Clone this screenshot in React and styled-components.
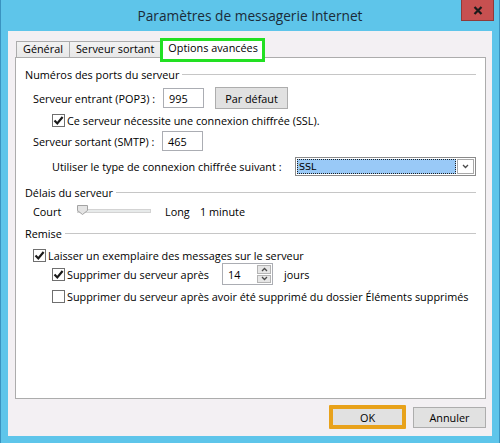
import React from "react";
import styled, { createGlobalStyle } from "styled-components";

const GlobalStyle = createGlobalStyle`
  html, body {
    margin: 0;
    padding: 0;
    background: #fff;
  }
  body {
    font-family: "Open Sans", "Noto Sans", sans-serif;
    font-size: 10.85px;
    color: #000;
  }
  * {
    box-sizing: border-box;
  }
`;

const Window = styled.div`
  width: 500px;
  height: 443px;
  background: #5ec5ea;
  border-left: 1px solid #3a93c0;
  border-right: 1px solid #3a93c0;
  display: flex;
  flex-direction: column;
`;

const TitleBar = styled.div`
  height: 31px;
  flex-shrink: 0;
  display: grid;
  grid-template-columns: 1fr auto 1fr;
  align-items: start;
`;

const Title = styled.div`
  grid-column: 2;
  align-self: center;
  font-size: 13.7px;
  color: #1b2b38;
  white-space: nowrap;
  padding-bottom: 1px;
`;

const CloseButton = styled.div`
  grid-column: 3;
  justify-self: end;
  margin-right: 5px;
  width: 33px;
  height: 21px;
  background: #c75050;
  border: 1px solid #8f3a3a;
  border-top: none;
  display: flex;
  align-items: center;
  justify-content: center;
`;

const Client = styled.div`
  flex: 1;
  margin: 0 7px 7px 7px;
  background: #f3f0f3;
  padding: 10px 6px 0 7px;
  display: flex;
  flex-direction: column;
`;

const TabStrip = styled.div`
  display: flex;
  align-items: flex-end;
  height: 16px;
  padding-left: 1px;
`;

const Tab = styled.div`
  height: 16px;
  padding: 0 6px;
  margin-left: ${(p) => (p.$first ? 0 : -1)}px;
  border: 1px solid #acacac;
  border-bottom: none;
  background: linear-gradient(#f2f2f2, #e8e8e8);
  line-height: 14px;
  white-space: nowrap;
`;

const ActiveTab = styled.div`
  position: relative;
  z-index: 1;
  width: 105px;
  height: 24px;
  margin-left: -1px;
  margin-bottom: -5px;
  border: 3px solid #22e022;
  background: #fff;
  padding-left: 5px;
  line-height: 14px;
  white-space: nowrap;
`;

const Panel = styled.div`
  height: 342px;
  background: #fff;
  border: 1px solid #acacac;
  padding: 8px 9px 0 9px;
  display: flex;
  flex-direction: column;
`;

const Row = styled.div`
  display: flex;
  align-items: center;
  height: ${(p) => p.$h || 16}px;
  margin-top: ${(p) => p.$mt || 0}px;
  padding-left: ${(p) => p.$indent || 0}px;
  white-space: nowrap;
`;

const Label = styled.span`
  flex-shrink: 0;
  width: ${(p) => (p.$w ? `${p.$w}px` : "auto")};
  margin-left: ${(p) => p.$ml || 0}px;
`;

const Rule = styled.div`
  flex: 1;
  height: 1px;
  margin-left: 3px;
  background: #c6c6c6;
`;

const TextBox = styled.div`
  width: ${(p) => p.$w}px;
  height: ${(p) => p.$h || 20}px;
  border: 1px solid #abadb3;
  background: #fff;
  padding-left: 5px;
  display: flex;
  align-items: center;
`;

const Button = styled.div`
  width: ${(p) => p.$w || 73}px;
  height: ${(p) => p.$h || 21}px;
  margin-left: ${(p) => p.$ml || 0}px;
  background: #e1e1e1;
  border: 1px solid #adadad;
  display: flex;
  align-items: center;
  justify-content: center;
`;

const HighlightButton = styled.div`
  width: 77px;
  height: 24px;
  background: #e1e1e1;
  border: 4px solid #e8a21b;
  border-radius: 1px;
  display: flex;
  align-items: center;
  justify-content: center;
`;

const Box = styled.span`
  flex-shrink: 0;
  width: 13px;
  height: 13px;
  border: 1px solid #6f6f6f;
  background: #fff;
  display: flex;
  align-items: center;
  justify-content: center;
  margin-right: 2px;
`;

const Select = styled.div`
  width: 181px;
  height: 19px;
  border: 1px solid #8a8a8a;
  background: #fff;
  display: flex;
  padding: 1px;
`;

const SelectValue = styled.div`
  flex: 1;
  background: #99c9f7;
  border: 1px dotted #202020;
  font-family: "DejaVu Sans", "Liberation Sans", sans-serif;
  font-size: 9.5px;
  line-height: 13px;
  padding-left: 1px;
`;

const SelectArrow = styled.div`
  width: 17px;
  margin-left: 1px;
  border: 1px solid #a8a8a8;
  background: #fff;
  display: flex;
  align-items: center;
  justify-content: center;
`;

const Slider = styled.div`
  position: relative;
  width: 74px;
  height: 16px;
  margin-right: 14px;
  display: flex;
  align-items: center;
`;

const Track = styled.div`
  width: 100%;
  height: 4px;
  background: #e7eaea;
  border: 1px solid #d3d3d3;
`;

const Thumb = styled.svg`
  position: absolute;
  left: 0;
  top: 2px;
`;

const SpinWrap = styled.div`
  display: flex;
  height: 22px;
  border: 1px solid #abadb3;
  background: #fff;
  margin-right: 11px;
`;

const SpinInput = styled.div`
  width: 34px;
  padding-left: 5px;
  display: flex;
  align-items: center;
`;

const SpinButtons = styled.div`
  width: 15px;
  display: flex;
  flex-direction: column;
  padding: 1px 1px 1px 0;
  gap: 1px;
`;

const SpinButton = styled.div`
  flex: 1;
  background: #e6e6e6;
  border: 1px solid #b4b4b4;
  display: flex;
  align-items: center;
  justify-content: center;
`;

const Footer = styled.div`
  margin-top: 6px;
  display: flex;
  justify-content: flex-end;
  align-items: center;
  gap: 7px;
`;

function Check({ checked }) {
  return (
    <Box>
      {checked && (
        <svg width="11" height="11" viewBox="0 0 11 11">
          <path
            d="M1.5 5.5 L4.3 8.4 L9.6 2"
            fill="none"
            stroke="#1a1a1a"
            strokeWidth="2.2"
          />
        </svg>
      )}
    </Box>
  );
}

function GroupHeader({ title, mt }) {
  return (
    <Row $mt={mt}>
      <Label>{title}</Label>
      <Rule />
    </Row>
  );
}

function Chevron({ up }) {
  return (
    <svg width="7" height="5" viewBox="0 0 7 5">
      <path
        d={up ? "M1 4 L3.5 1.5 L6 4" : "M1 1 L3.5 3.5 L6 1"}
        fill="none"
        stroke="#4a4a4a"
        strokeWidth="1.3"
      />
    </svg>
  );
}

export default function App() {
  return (
    <>
      <GlobalStyle />
      <Window>
        <TitleBar>
          <Title>Paramètres de messagerie Internet</Title>
          <CloseButton>
            <svg width="10" height="9" viewBox="0 0 10 9">
              <path
                d="M1.5 1 L8.5 8 M8.5 1 L1.5 8"
                stroke="#1a1a1a"
                strokeWidth="2.2"
              />
            </svg>
          </CloseButton>
        </TitleBar>
        <Client>
          <TabStrip>
            <Tab $first>Général</Tab>
            <Tab>Serveur sortant</Tab>
            <ActiveTab>Options avancées</ActiveTab>
          </TabStrip>
          <Panel>
            <GroupHeader title="Numéros des ports du serveur" />
            <Row $h={22} $mt={5} $indent={8}>
              <Label $w={130}>Serveur entrant (POP3) :</Label>
              <TextBox $w={41}>995</TextBox>
              <Button $w={73} $h={22} $ml={11}>
                Par défaut
              </Button>
            </Row>
            <Row $h={18} $mt={2} $indent={27}>
              <Check checked />
              <Label>Ce serveur nécessite une connexion chiffrée (SSL).</Label>
            </Row>
            <Row $h={20} $mt={2} $indent={8}>
              <Label $w={129}>Serveur sortant (SMTP) :</Label>
              <TextBox $w={41}>465</TextBox>
            </Row>
            <Row $h={20} $mt={5} $indent={27}>
              <Label $w={243}>
                Utiliser le type de connexion chiffrée suivant :
              </Label>
              <Select>
                <SelectValue>SSL</SelectValue>
                <SelectArrow>
                  <Chevron />
                </SelectArrow>
              </Select>
            </Row>
            <GroupHeader title="Délais du serveur" mt={8} />
            <Row $mt={3} $indent={8}>
              <Label $w={44}>Court</Label>
              <Slider>
                <Track />
                <Thumb width="11" height="10" viewBox="0 0 11 10">
                  <polygon
                    points="0.5,0.5 10.5,0.5 10.5,5.5 5.5,9.5 0.5,5.5"
                    fill="#e4e4e4"
                    stroke="#a3a3a3"
                  />
                </Thumb>
              </Slider>
              <Label $w={35}>Long</Label>
              <Label>1 minute</Label>
            </Row>
            <GroupHeader title="Remise" mt={6} />
            <Row $mt={6} $indent={8}>
              <Check checked />
              <Label>Laisser un exemplaire des messages sur le serveur</Label>
            </Row>
            <Row $h={22} $indent={27}>
              <Check checked />
              <Label $w={155}>Supprimer du serveur après</Label>
              <SpinWrap>
                <SpinInput>14</SpinInput>
                <SpinButtons>
                  <SpinButton>
                    <Chevron up />
                  </SpinButton>
                  <SpinButton>
                    <Chevron />
                  </SpinButton>
                </SpinButtons>
              </SpinWrap>
              <Label>jours</Label>
            </Row>
            <Row $mt={3} $indent={27}>
              <Check />
              <Label>
                Supprimer du serveur après avoir été supprimé du dossier
                Éléments supprimés
              </Label>
            </Row>
          </Panel>
          <Footer>
            <HighlightButton>OK</HighlightButton>
            <Button $w={73} $h={21}>
              Annuler
            </Button>
          </Footer>
        </Client>
      </Window>
    </>
  );
}
